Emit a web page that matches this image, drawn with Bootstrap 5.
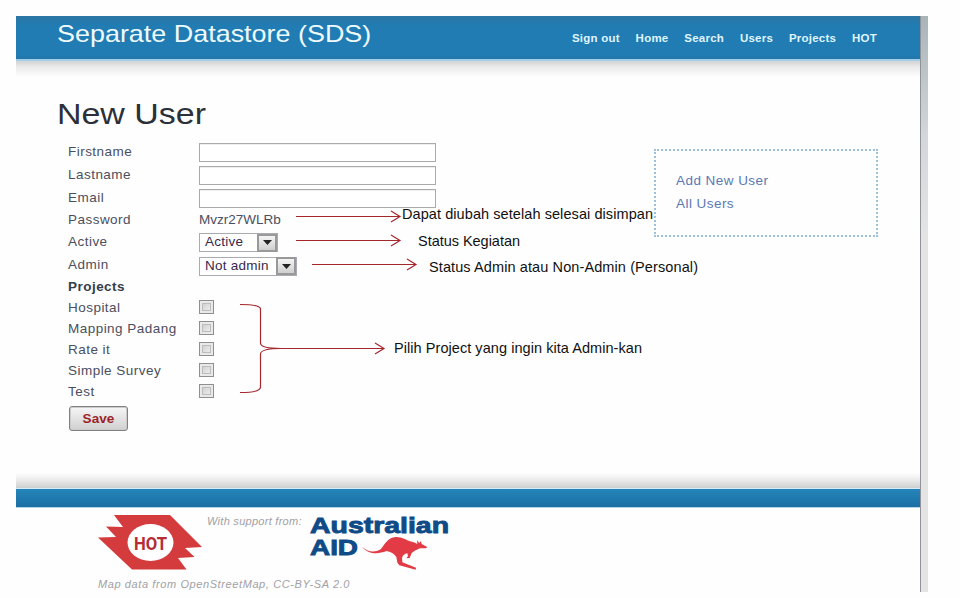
<!DOCTYPE html>
<html lang="en">
<head>
<meta charset="utf-8">
<meta name="viewport" content="width=device-width, initial-scale=1">
<title>Separate Datastore (SDS)</title>
<link href="https://cdn.jsdelivr.net/npm/bootstrap@5.3.0/dist/css/bootstrap.min.css" rel="stylesheet">
<style>
body{font-family:"Liberation Sans",Arial,sans-serif;font-size:13.5px;line-height:1.2;color:#4b4e60;background:#fefefe;height:598px;overflow:hidden}
.page-frame{width:912px;height:576px;margin:16px 0 0 16px}
.page-sheet{width:904px;background:#fefefe}
.page-edge{width:8px;border-left:1px solid #8f9397;background:linear-gradient(#a9b4b8,#d3d6da 120px,#e4e4e5 220px,#e4e4e4)}
.site-header{height:45px;padding:0 43px 0 41px;background:linear-gradient(#2c75a2,#207cb3 10px,#207cb3 39px,#2475a8 43px);border-bottom:2px solid #a4cfea;flex-wrap:nowrap}
.site-title{font-size:24px;line-height:28px;color:#effaff;transform:scaleX(1.122);transform-origin:left;white-space:nowrap;margin-top:4px}
.site-links{gap:15.8px;margin-top:15px}
.site-links .nav-link{padding:0;font-size:11.5px;line-height:15px;font-weight:700;color:#dff5ff;white-space:nowrap;letter-spacing:.24px}
.shade-top{height:16px;background:linear-gradient(#d2d3d3,#ebebeb 6px,#fefefe)}
.page-main{height:396px;padding:0 42px 0 41px}
.page-title{font-size:29px;line-height:34px;color:#2c3039;margin:20px 0 0;transform:scaleX(1.17);transform-origin:left;width:150px;white-space:nowrap;font-weight:400}
.user-form{width:380px;padding-left:11px;margin-top:10px}
.field-line{height:23px;letter-spacing:.47px}
.field-line>label,.field-line>.field-name{width:131px;flex:none;white-space:nowrap;margin-top:-1px}
.pass-value{letter-spacing:0;margin-top:-1px}
.line-pass{height:21px}.line-admin{height:24px}.line-head{height:20px;color:#343d4c}.line-check{height:21px}
.field-line .form-control{width:237px;height:19px;min-height:0;border:1px solid #aaa;border-radius:0;padding:0;background:#fff;box-shadow:inset 0 1px #eee}
.pick{height:19px;border:1px solid #aaaab0;color:#37294c;padding-left:5px;letter-spacing:.25px;background:#fff}
.pick-arrow{width:20px;height:18px;border:2px solid #999;background:linear-gradient(#f4f4f4,#cfcfcf)}
.w-active{width:79px}.w-admin{width:98px}
.field-line .form-check-input{width:15px;height:14px;margin:0 0 3px;border:1px solid #8f8f8f;border-radius:0;background:linear-gradient(135deg,#c8c8c8,#f6f6f6);box-shadow:inset 0 0 0 2px #e9e9e9,inset 0 0 0 3px #bcbcbc}
.save-btn{width:59px;height:25px;margin:3px 0 0 1px;padding:0;font-size:13.5px;line-height:1;font-weight:700;color:#9d2328;letter-spacing:.1px;border:1px solid #808080;border-radius:3px;background:linear-gradient(#f6f6f6,#d0d0d0);box-shadow:inset 0 0 0 1px #ccc}
.side-menu{width:224px;height:88px;border:2px dotted #9cc1dc;padding:18px 20px;margin-top:72px}
.side-menu a{color:#5b78b4;text-decoration:none;line-height:23px;letter-spacing:.45px}
.shade-bottom{height:15px;background:linear-gradient(#fefefe,#e8e8e8 8px,#cdcfcf)}
.blue-bar{height:20px;border-top:1px solid #d5ebf7;border-bottom:1px solid #b5d5e8;background:linear-gradient(#2585ba,#1b6fa4)}
.site-footer{padding:7px 0 0 82px;color:#a1a1a5;font-style:italic;font-size:11px}
.support-note{margin:0 4px 0 4px;width:99px;letter-spacing:.28px;white-space:nowrap}
.map-note{letter-spacing:.6px;margin-top:6px}
.aid-logo{overflow:visible}
.notes-layer{left:0;top:0;pointer-events:none}
</style>
<script src="https://cdn.jsdelivr.net/npm/bootstrap@5.3.0/dist/js/bootstrap.bundle.min.js"></script>
</head>
<body class="position-relative">
<div class="page-frame d-flex">
  <div class="page-sheet d-flex flex-column">
    <header class="site-header d-flex justify-content-between align-items-start">
      <div class="site-title">Separate Datastore (SDS)</div>
      <nav class="nav site-links flex-nowrap">
        <a class="nav-link" href="#">Sign out</a><a class="nav-link" href="#">Home</a><a class="nav-link" href="#">Search</a><a class="nav-link" href="#">Users</a><a class="nav-link" href="#">Projects</a><a class="nav-link" href="#">HOT</a>
      </nav>
    </header>
    <div class="shade-top"></div>
    <main class="page-main d-flex justify-content-between align-items-start">
      <div>
        <h1 class="page-title">New User</h1>
        <form class="user-form">
          <div class="field-line d-flex align-items-center"><label for="fn">Firstname</label><input id="fn" class="form-control" type="text"></div>
          <div class="field-line d-flex align-items-center"><label for="ln">Lastname</label><input id="ln" class="form-control" type="text"></div>
          <div class="field-line d-flex align-items-center"><label for="em">Email</label><input id="em" class="form-control" type="text"></div>
          <div class="field-line line-pass d-flex align-items-center"><span class="field-name">Password</span><span class="pass-value">Mvzr27WLRb</span></div>
          <div class="field-line d-flex align-items-center"><span class="field-name">Active</span>
            <div class="pick w-active d-flex justify-content-between align-items-center">Active<span class="pick-arrow d-flex align-items-center justify-content-center"><svg width="9" height="5" viewBox="0 0 9 5"><path d="M0 0h9L4.500 5z" fill="#222"/></svg></span></div></div>
          <div class="field-line line-admin d-flex align-items-center"><span class="field-name">Admin</span>
            <div class="pick w-admin d-flex justify-content-between align-items-center">Not admin<span class="pick-arrow d-flex align-items-center justify-content-center"><svg width="9" height="5" viewBox="0 0 9 5"><path d="M0 0h9L4.500 5z" fill="#222"/></svg></span></div></div>
          <div class="field-line line-head d-flex align-items-center fw-bold"><span class="field-name">Projects</span></div>
          <div class="field-line line-check d-flex align-items-center"><label for="p1">Hospital</label><input id="p1" class="form-check-input" type="checkbox"></div>
          <div class="field-line line-check d-flex align-items-center"><label for="p2">Mapping Padang</label><input id="p2" class="form-check-input" type="checkbox"></div>
          <div class="field-line line-check d-flex align-items-center"><label for="p3">Rate it</label><input id="p3" class="form-check-input" type="checkbox"></div>
          <div class="field-line line-check d-flex align-items-center"><label for="p4">Simple Survey</label><input id="p4" class="form-check-input" type="checkbox"></div>
          <div class="field-line line-check d-flex align-items-center"><label for="p5">Test</label><input id="p5" class="form-check-input" type="checkbox"></div>
          <button type="button" class="btn save-btn">Save</button>
        </form>
      </div>
      <aside class="side-menu d-flex flex-column"><a href="#">Add New User</a><a href="#">All Users</a></aside>
    </main>
    <div class="shade-bottom"></div>
    <div class="blue-bar"></div>
    <footer class="site-footer">
      <div class="d-flex align-items-start">
        <svg width="105" height="57" viewBox="0 0 105 57" role="img" aria-label="HOT">
          <path d="M16 0H72L104 32L87 33L96.500 42L80 43L88.500 54.500H34L0 22.500L18 22L8 11.500L25 12Z" fill="#d43b3d"/>
          <ellipse cx="52.500" cy="27.500" rx="23" ry="18.500" fill="#fff"/>
          <text x="36" y="34.500" textLength="33" lengthAdjust="spacingAndGlyphs" font-family="Roboto, sans-serif" font-weight="700" font-style="normal" font-size="19" fill="#b52c35">HOT</text>
        </svg>
        <span class="support-note">With support from:</span>
        <svg class="aid-logo" width="146" height="57" viewBox="0 0 146 57" role="img" aria-label="Australian AID">
          <g font-family="Liberation Sans, Arial, sans-serif" font-weight="700" font-style="normal" font-size="22.500" fill="#104b87" stroke="#104b87" stroke-width=".9">
            <text x="0" y="17.500" textLength="139" lengthAdjust="spacingAndGlyphs">Australian</text>
            <text x="0" y="40" textLength="48" lengthAdjust="spacingAndGlyphs">AID</text>
          </g>
          <path transform="translate(-109.300 -15) scale(.3333)" d="M484 140C500 155 520 160 540 148C552 134 560 113 585 111C607 110 622 124 636 126Q644 127 650 132L649 121L656 129L661 123L663 132L680 141L676 145L658 145C646 150 640 154 633 159L627 174L617 175L622 168L620 160C612 162 606 165 604 174L605 187L646 203L645 209L596 196L590 188L587 171C581 162 573 156 558 153C530 163 505 164 484 140Z" fill="#e33b45"/>
        </svg>
      </div>
      <div class="map-note">Map data from OpenStreetMap, CC-BY-SA 2.0</div>
    </footer>
  </div>
  <div class="page-edge"></div>
</div>
<!-- Explanatory arrows and notes over the form -->
<svg class="notes-layer position-absolute" width="960" height="598" viewBox="0 0 960 598">
  <g fill="none" stroke="#a5262c" stroke-width="1.200">
    <path d="M296 216.500H400M391 211l9 5.500l-9 5.500M296 240.500H400M391 235l9 5.500l-9 5.500M312 264.500H416M407 259l9 5.500l-9 5.500M272 348.500H384M375 343l9 5.500l-9 5.500"/>
    <path d="M240 304.500Q260.500 304.500 260.500 309V343Q260.500 348.500 281 348.500Q260.500 348.500 260.500 354V387Q260.500 392.500 240 392.500"/>
  </g>
  <g font-family="Liberation Sans, Arial, sans-serif" font-size="14.500" fill="#111">
    <text x="402" y="219" textLength="251">Dapat diubah setelah selesai disimpan</text>
    <text x="418" y="246" textLength="102">Status Kegiatan</text>
    <text x="429" y="272" textLength="269">Status Admin atau Non-Admin (Personal)</text>
    <text x="394" y="353" textLength="248">Pilih Project yang ingin kita Admin-kan</text>
  </g>
</svg>
</body>
</html>
